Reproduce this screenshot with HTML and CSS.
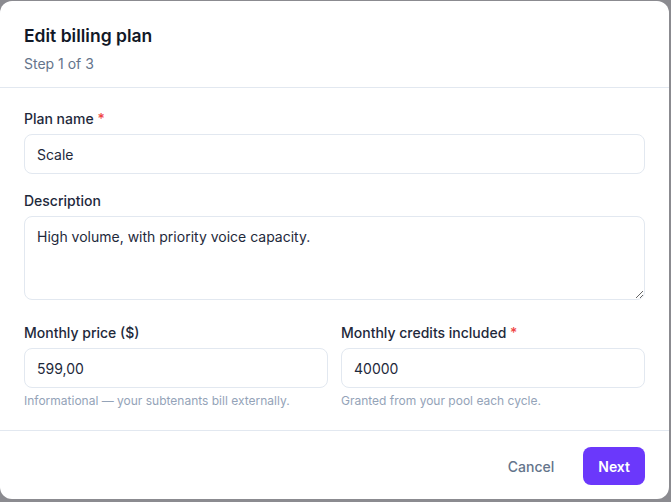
FILE: index.html
```html
<!DOCTYPE html>
<html lang="en">
<head>
<meta charset="utf-8">
<title>Edit billing plan</title>
<link rel="stylesheet" href="styles.css">
</head>
<body>
<div class="backdrop">
  <div class="modal">
    <div class="modal-header">
      <h2 class="title">Edit billing plan</h2>
      <p class="subtitle">Step 1 of 3</p>
    </div>
    <div class="modal-body">
      <div class="field field-name">
        <label class="label">Plan name <span class="req">*</span></label>
        <input class="input" type="text" value="Scale">
      </div>
      <div class="field field-desc">
        <label class="label">Description</label>
        <textarea class="input textarea">High volume, with priority voice capacity.</textarea>
      </div>
      <div class="row">
        <div class="field">
          <label class="label">Monthly price ($)</label>
          <input class="input" type="text" value="599,00">
          <p class="help">Informational — your subtenants bill externally.</p>
        </div>
        <div class="field">
          <label class="label">Monthly credits included <span class="req">*</span></label>
          <input class="input" type="text" value="40000">
          <p class="help">Granted from your pool each cycle.</p>
        </div>
      </div>
    </div>
    <div class="modal-footer">
      <button class="btn btn-ghost" type="button">Cancel</button>
      <button class="btn btn-primary" type="button">Next</button>
    </div>
  </div>
</div>
</body>
</html>
```

FILE: styles.css
```css
* { box-sizing: border-box; }
html, body {
  margin: 0;
  padding: 0;
  width: 671px;
  height: 502px;
  overflow: hidden;
  font-family: Inter, "Noto Sans", sans-serif;
}
body { background: #8b8b90; }
.backdrop {
  padding: 1px 2px 3px 0;
}
.modal {
  width: 669px;
  height: 498px;
  background: #ffffff;
  border-radius: 12px;
  display: flex;
  flex-direction: column;
}
.modal-header {
  padding: 23px 24px 13px;
  border-bottom: 1px solid #e2e8f0;
}
.title {
  margin: 0;
  font-size: 17.5px;
  line-height: 24px;
  font-weight: 600;
  color: #111827;
}
.subtitle {
  margin: 6px 0 0;
  font-size: 14px;
  line-height: 20px;
  color: #64748b;
}
.modal-body {
  padding: 21px 24px 21px;
  border-bottom: 1px solid #e2e8f0;
}
.field {
  display: flex;
  flex-direction: column;
  min-width: 0;
}
.field-name { margin-bottom: 17px; }
.field-desc { margin-bottom: 23px; }
.label {
  font-size: 14px;
  line-height: 20px;
  font-weight: 500;
  color: #1e293b;
  margin-bottom: 5px;
}
.req { color: #ef4444; }
.input {
  display: block;
  width: 100%;
  height: 40px;
  border: 1px solid #e2e8f0;
  border-radius: 8px;
  padding: 0 12px;
  font-family: Inter, "Noto Sans", sans-serif;
  font-size: 14px;
  color: #1e293b;
  background: #ffffff;
  outline: none;
}
.textarea {
  height: 84px;
  padding: 10px 12px;
  line-height: 20px;
  resize: vertical;
}
.row {
  display: grid;
  grid-template-columns: 1fr 1fr;
  column-gap: 13px;
}
.help {
  margin: 5px 0 0;
  font-size: 12px;
  line-height: 16px;
  color: #94a3b8;
}
.modal-footer {
  display: flex;
  justify-content: flex-end;
  align-items: center;
  gap: 14px;
  padding: 16px 24px 0;
}
.btn {
  font-family: Inter, "Noto Sans", sans-serif;
  font-size: 14px;
  height: 38px;
  border-radius: 8px;
  border: none;
  cursor: pointer;
}
.btn-ghost {
  background: transparent;
  color: #64748b;
  font-weight: 500;
  padding: 0 15px;
}
.btn-primary {
  background: #6b38fb;
  color: #ffffff;
  font-weight: 600;
  padding: 0 15px;
}
```
